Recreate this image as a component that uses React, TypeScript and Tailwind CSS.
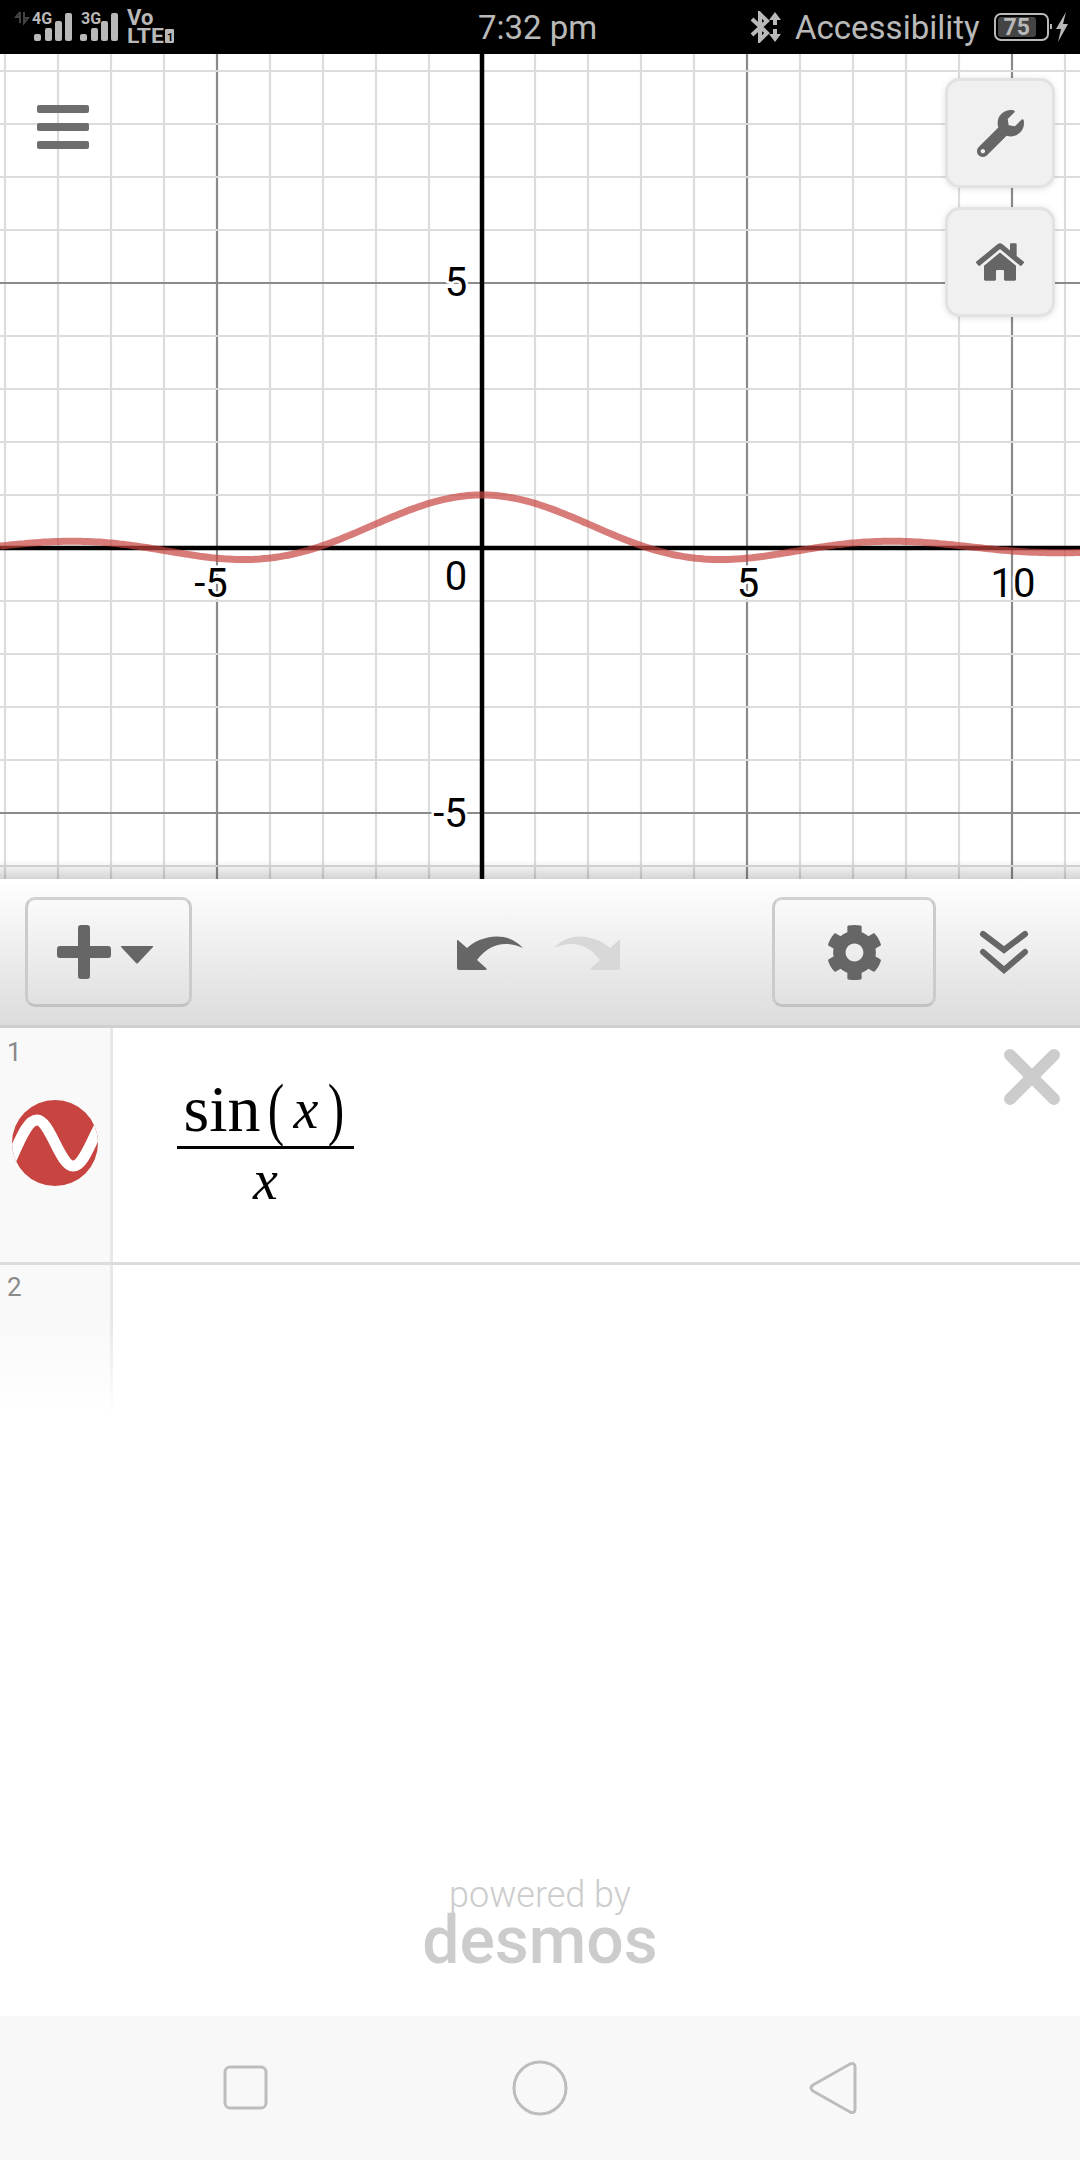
import { FaWrench, FaHome, FaCog } from 'react-icons/fa'

const UNIT = 53
const ORIGIN_X = 482
const ORIGIN_Y = 494 // axis, relative to the top of the graph
const HEIGHT = 825

const sincPath = () => {
  const points: string[] = []
  for (let px = 0; px <= 1080; px += 4) {
    const x = (px - ORIGIN_X) / UNIT
    const y = x === 0 ? 1 : Math.sin(x) / x
    points.push(`${px},${(ORIGIN_Y - y * UNIT).toFixed(1)}`)
  }
  return 'M' + points.join(' L')
}

function Graph() {
  const columns: number[] = []
  for (let i = -9; i <= 11; i++) columns.push(i)
  const rows: number[] = []
  for (let i = -6; i <= 9; i++) rows.push(i)

  return (
    <svg width="1080" height={HEIGHT} className="block">
      {columns.map(i => i !== 0 && (
        <line key={i} x1={ORIGIN_X + i * UNIT} x2={ORIGIN_X + i * UNIT} y1="0" y2={HEIGHT}
          stroke={i % 5 === 0 ? '#8a8a8a' : '#dcdcdc'} strokeWidth="2.2" />
      ))}
      {rows.map(i => i !== 0 && (
        <line key={i} x1="0" x2="1080" y1={ORIGIN_Y - i * UNIT} y2={ORIGIN_Y - i * UNIT}
          stroke={i % 5 === 0 ? '#8a8a8a' : '#dcdcdc'} strokeWidth="2.2" />
      ))}
      <line x1={ORIGIN_X} x2={ORIGIN_X} y1="0" y2={HEIGHT} stroke="#000" strokeWidth="4.5" />
      <line x1="0" x2="1080" y1={ORIGIN_Y} y2={ORIGIN_Y} stroke="#000" strokeWidth="4.5" />
      <path d={sincPath()} fill="none" stroke="#c74440" strokeOpacity="0.7" strokeWidth="7" />
      <g fontFamily="Roboto, sans-serif" fontSize="40" fill="#000" stroke="#fff" strokeWidth="5" paintOrder="stroke" textAnchor="middle">
        <text x="456" y="242">5</text>
        <text x="211" y="543">-5</text>
        <text x="456" y="536">0</text>
        <text x="748" y="543">5</text>
        <text x="1013" y="543">10</text>
        <text x="450" y="773">-5</text>
      </g>
    </svg>
  )
}

function StatusLeft() {
  const bars = (x: number) => (
    <g fill="#b9b9b9">
      <rect x={x} y="34" width="7" height="7" rx="2" />
      <rect x={x + 11} y="28" width="7" height="13" rx="2" />
      <rect x={x + 21} y="21" width="7" height="20" rx="2" />
      <rect x={x + 31} y="13" width="7" height="28" rx="2" />
    </g>
  )
  return (
    <svg width="180" height="54" className="block">
      <path d="M20 12 L20 23 M20 12 L16 17 L20 17 M24 12 L24 23 L28 18 L24 18" stroke="#444" strokeWidth="2" fill="none" />
      {bars(34)}
      {bars(80)}
      <g fontFamily="Roboto, sans-serif" fontWeight="700" fill="#b9b9b9">
        <text x="32" y="24" fontSize="16">4G</text>
        <text x="81" y="24" fontSize="16">3G</text>
        <text x="127" y="25" fontSize="22">Vo</text>
        <text x="127" y="43" fontSize="20" textLength="37" lengthAdjust="spacingAndGlyphs">LTE</text>
      </g>
      <rect x="165" y="29" width="9" height="14" rx="1" fill="#b9b9b9" />
      <text x="167" y="41" fontSize="11" fontWeight="700" fontFamily="Roboto, sans-serif" fill="#000">1</text>
    </svg>
  )
}

function BluetoothData() {
  return (
    <svg width="32" height="32" viewBox="0 0 32 32" className="block">
      <path d="M2 8 L17 22 L10 29 L10 3 L17 10 L2 24" fill="none" stroke="#b9b9b9" strokeWidth="4" />
      <path d="M25 1 L31 9 L27 9 L27 14 L23 14 L23 9 L19 9 Z M25 31 L31 23 L27 23 L27 18 L23 18 L23 23 L19 23 Z" fill="#b9b9b9" />
    </svg>
  )
}

function StatusBar() {
  return (
    <div className="flex h-[54px] items-center bg-black font-['Roboto',sans-serif] text-[#b9b9b9]">
      <StatusLeft />
      <span className="ml-[298px] w-[272px] text-[33px] leading-none">7:32 pm</span>
      <BluetoothData />
      <span className="ml-[13px] text-[33px] leading-none">Accessibility</span>
      <div className="relative ml-[14px] flex h-[28px] w-[55px] items-center rounded-[7px] border-2 border-[#b9b9b9] p-[2px]">
        <div className="flex h-full w-[38px] items-center justify-center rounded-[3px] bg-[#444] text-[23px] font-bold leading-none">75</div>
      </div>
      <svg width="20" height="32" viewBox="0 0 20 32" className="ml-[1px] block">
        <rect x="0" y="13" width="2" height="5" fill="#b9b9b9" />
        <path d="M16 1 L6 18 L11 18 L8 31 L18 13 L13 13 Z" fill="#b9b9b9" />
      </svg>
    </div>
  )
}

function GraphPanel() {
  return (
    <div className="relative h-[825px] overflow-hidden bg-white">
      <Graph />
      <div className="absolute left-[37px] top-[51px] flex w-[52px] flex-col gap-[10px]">
        <div className="h-[8px] rounded-[2px] bg-[#6e6e6e]" />
        <div className="h-[8px] rounded-[2px] bg-[#6e6e6e]" />
        <div className="h-[8px] rounded-[2px] bg-[#6e6e6e]" />
      </div>
      <div className="absolute left-[945px] top-[24px] flex flex-col gap-[19px]">
        <div className="flex h-[110px] w-[110px] items-center justify-center rounded-[15px] border-[3px] border-[#e2e2e2] bg-[#f0f0f0] text-[#666] shadow-[0_1px_6px_rgba(0,0,0,0.12)]">
          <FaWrench size={47} />
        </div>
        <div className="flex h-[110px] w-[110px] items-center justify-center rounded-[15px] border-[3px] border-[#e2e2e2] bg-[#f0f0f0] text-[#666] shadow-[0_1px_6px_rgba(0,0,0,0.12)]">
          <FaHome size={48} />
        </div>
      </div>
      <div className="absolute bottom-0 left-0 right-0 h-[19px] bg-gradient-to-b from-[rgba(0,0,0,0)] to-[rgba(0,0,0,0.17)]" />
    </div>
  )
}

function UndoIcon({ color, flip }: { color: string; flip?: boolean }) {
  return (
    <svg width="70" height="40" viewBox="0 0 70 40" className={`block ${flip ? '-scale-x-100' : ''}`}>
      <path d="M12 16 C22 6 50 -4 68 16 C50 8 34 12 22 28 L31 36 Q33 38 30 38 L4 38 Q2 38 2 36 L2 9 Q2 7 4 9 Z" fill={color} />
    </svg>
  )
}

function Toolbar() {
  return (
    <div className="flex h-[149px] items-center border-b-[3px] border-[#cfcfcf] bg-gradient-to-b from-white to-[#dcdcdc]">
      <div className="ml-[25px] flex h-[110px] w-[167px] items-center rounded-[10px] border-[3px] border-t-[#d2d2d2] border-x-[#cbcbcb] border-b-[#c2c2c2] pl-[29px]">
        <svg width="96" height="56" viewBox="0 0 96 56" className="block">
          <rect x="0" y="22" width="54" height="12" rx="3" fill="#666" />
          <rect x="21" y="1" width="12" height="54" rx="3" fill="#666" />
          <path d="M64 23 Q63 22 65 22 L95 22 Q97 22 96 23 L81 39 Q80 40 79 39 Z" fill="#666" />
        </svg>
      </div>
      <div className="ml-[263px]"><UndoIcon color="#666" /></div>
      <div className="ml-[27px]"><UndoIcon color="#d8d8d8" flip /></div>
      <div className="ml-[150px] flex h-[110px] w-[164px] items-center justify-center rounded-[10px] border-[3px] border-t-[#d2d2d2] border-x-[#cbcbcb] border-b-[#c2c2c2] text-[#666]">
        <FaCog size={57} />
      </div>
      <svg width="50" height="46" viewBox="0 0 50 46" className="ml-[43px] mt-[2px] block">
        <path d="M4 4 L25 20 L46 4 M4 22 L25 40 L46 22" fill="none" stroke="#666" strokeWidth="6" strokeLinecap="round" strokeLinejoin="miter" />
      </svg>
    </div>
  )
}

function SineLogo() {
  return (
    <svg width="86" height="86" viewBox="0 0 86 86" className="block">
      <defs>
        <clipPath id="logo-clip"><circle cx="43" cy="43" r="43" /></clipPath>
      </defs>
      <circle cx="43" cy="43" r="43" fill="#c74440" />
      <path d="M-4 66 C6 46 14 20 25 20 C38 20 48 66 61 66 C72 66 78 42 92 18" fill="none" stroke="#fff" strokeWidth="11" clipPath="url(#logo-clip)" />
    </svg>
  )
}

function Fraction() {
  return (
    <div className="ml-[64px] mt-[44px] flex w-[177px] flex-col items-center font-['Liberation_Serif',serif] text-black">
      <div className="flex h-[74px] items-center whitespace-nowrap text-[66px] leading-none">
        <span>sin</span>
        <span className="ml-[4px] origin-center scale-x-75 scale-y-105 font-light">(</span>
        <span className="ml-[7px] text-[56px] italic">x</span>
        <span className="ml-[7px] origin-center scale-x-75 scale-y-105 font-light">)</span>
      </div>
      <div className="h-[3px] w-full bg-black" />
      <div className="mt-[3px] text-[56px] italic leading-[56px]">x</div>
    </div>
  )
}

function ExpressionList() {
  return (
    <div className="flex flex-1 flex-col bg-white font-['Roboto',sans-serif]">
      <div className="flex h-[237px] border-b-[3px] border-[#dcdcdc]">
        <div className="flex w-[113px] flex-col border-r-[3px] border-[#e8e8e8] bg-[#f9f9f9]">
          <span className="ml-[7px] mt-[9px] text-[26px] leading-[30px] text-[#8a8a8a]">1</span>
          <div className="ml-[12px] mt-[33px]"><SineLogo /></div>
        </div>
        <Fraction />
        <svg width="56" height="56" viewBox="0 0 56 56" className="ml-auto mr-[20px] mt-[21px] block">
          <path d="M6 6 L50 50 M50 6 L6 50" stroke="#cccccc" strokeWidth="12" strokeLinecap="round" />
        </svg>
      </div>
      <div className="flex h-[150px]">
        <div className="w-[110px] bg-gradient-to-b from-[#f9f9f9] from-40% to-white">
          <span className="ml-[7px] mt-[7px] block text-[26px] leading-[30px] text-[#8a8a8a]">2</span>
        </div>
        <div className="w-[3px] bg-gradient-to-b from-[#e8e8e8] from-40% to-white" />
      </div>
      <div className="mt-auto flex flex-col items-center pb-[48px] text-[#cccccc]">
        <span className="mt-[2px] text-[36px] font-light leading-[38px]">powered by</span>
        <span className="text-[66px] font-medium leading-[54px]">desmos</span>
      </div>
    </div>
  )
}

function NavBar() {
  return (
    <div className="flex h-[144px] items-center bg-[#f8f8f8] pl-[223px] text-[#bdbdbd]">
      <svg width="46" height="46" viewBox="0 0 46 46" className="block">
        <rect x="2" y="2" width="41" height="41" rx="5" fill="none" stroke="currentColor" strokeWidth="3" />
      </svg>
      <svg width="56" height="56" viewBox="0 0 56 56" className="ml-[243px] block">
        <circle cx="28" cy="28" r="26" fill="none" stroke="currentColor" strokeWidth="3" />
      </svg>
      <svg width="48" height="54" viewBox="0 0 48 54" className="ml-[241px] block">
        <path d="M41 3 Q46 1 46 6 L46 48 Q46 53 41 51 L4 30 Q0 27 4 24 Z" fill="none" stroke="currentColor" strokeWidth="3" />
      </svg>
    </div>
  )
}

export default function App() {
  return (
    <div className="flex h-[2160px] w-[1080px] flex-col overflow-hidden bg-white">
      <StatusBar />
      <GraphPanel />
      <Toolbar />
      <ExpressionList />
      <NavBar />
    </div>
  )
}
